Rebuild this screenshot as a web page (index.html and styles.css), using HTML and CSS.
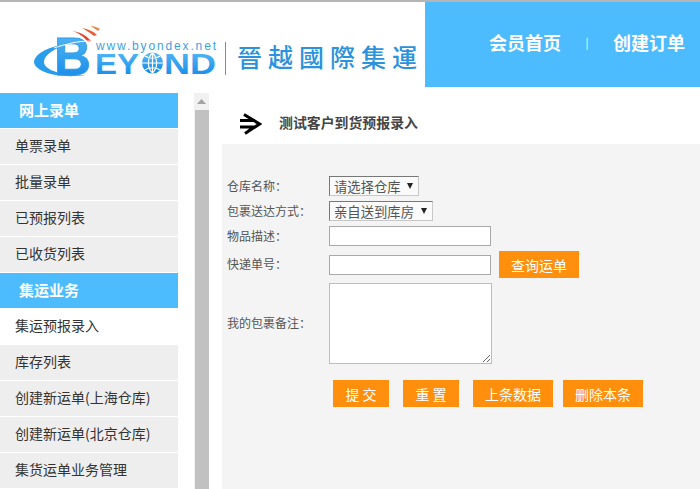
FILE: index.html
```html
<!DOCTYPE html>
<html lang="zh">
<head>
<meta charset="utf-8">
<title>测试客户到货预报录入</title>
<link rel="stylesheet" href="styles.css">
</head>
<body>
<header class="topbar">
  <div class="brand">
    <svg class="logo" width="183" height="54" viewBox="0 0 183 54" aria-label="Beyond">
      <defs>
        <linearGradient id="bl" x1="0" y1="0" x2="0" y2="1">
          <stop offset="0" stop-color="#5cbcf6"/>
          <stop offset="1" stop-color="#0f86e6"/>
        </linearGradient>
      </defs>
      <path d="M26 21 C9 25 0 32 0 38 C1 48 24 55 52 51 C28 52 10 46 10 38 C10 32 17 27 26 23 Z" fill="#2a9cec"/>
      <path d="M38 7 C46 8 52 11 57 17 L54 18 C50 13 45 9 38 7 Z" fill="#e8402a"/>
      <path d="M48 4 C54 5 59 7 63 11 L60 12 C56 9 52 6 48 4 Z" fill="#e8603a"/>
      <path d="M56 2 C60 2 63 3 66 5 L64 7 C61 5 59 3 56 2 Z" fill="#e88a50"/>
      <text class="logo-b" x="20" y="51" textLength="37" lengthAdjust="spacingAndGlyphs">B</text>
      <path d="M20 24 C32 20 44 17 56 17" fill="none" stroke="#fff" stroke-width="1"/>
      <text class="logo-url" x="62" y="26" textLength="120">www.byondex.net</text>
      <text class="logo-name" x="61" y="50" textLength="44" lengthAdjust="spacingAndGlyphs">EY</text>
      <circle cx="118.5" cy="39" r="10.5" fill="url(#bl)"/>
      <path d="M108 39 H129 M118.500 29 V49 M111 32 C115 35 122 35 126 32 M111 46 C115 43 122 43 126 46 M118.500 29 C113 34 113 44 118.500 49 M118.500 29 C124 34 124 44 118.500 49" fill="none" stroke="#fff" stroke-width="1.2"/>
      <text class="logo-name" x="130" y="50" textLength="52" lengthAdjust="spacingAndGlyphs">ND</text>
    </svg>
    <span class="brand-rule"></span>
    <span class="brand-name">晉越國際集運</span>
  </div>
  <nav class="topnav">
    <a class="topnav-link">会员首页</a>
    <span class="topnav-sep">|</span>
    <a class="topnav-link">创建订单</a>
  </nav>
</header>

<div class="layout">
  <aside class="sidebar">
    <h2 class="side-title">网上录单</h2>
    <a class="side-item">单票录单</a>
    <a class="side-item">批量录单</a>
    <a class="side-item">已预报列表</a>
    <a class="side-item">已收货列表</a>
    <h2 class="side-title">集运业务</h2>
    <a class="side-item is-active">集运预报录入</a>
    <a class="side-item">库存列表</a>
    <a class="side-item">创建新运单(上海仓库)</a>
    <a class="side-item">创建新运单(北京仓库)</a>
    <a class="side-item">集货运单业务管理</a>
  </aside>

  <div class="scrollbar">
    <div class="scroll-btn"><svg width="9" height="5" viewBox="0 0 9 5"><path d="M4.500 0 L9 5 H0 Z" fill="#a3a3a3"/></svg></div>
    <div class="scroll-thumb"></div>
  </div>

  <main class="content">
    <div class="page-title">
      <svg class="title-icon" width="22" height="22" viewBox="0 0 22 22">
        <path d="M4 1.500 L19.500 11 L5 20.500 M0 7.500 H15 M0 14 H14 L8.500 18" fill="none" stroke="#000" stroke-width="3"/>
      </svg>
      <h1 class="title-text">测试客户到货预报录入</h1>
    </div>
    <form class="panel">
      <div class="row">
        <label class="field-label">仓库名称：</label>
        <span class="pick-wrap"><select class="pick pick-short"><option>请选择仓库</option></select></span>
      </div>
      <div class="row row-next">
        <label class="field-label">包裹送达方式：</label>
        <span class="pick-wrap"><select class="pick pick-long"><option>亲自送到库房</option></select></span>
      </div>
      <div class="row row-next">
        <label class="field-label">物品描述：</label>
        <input class="text-input" type="text">
      </div>
      <div class="row row-next row-query">
        <label class="field-label">快递单号：</label>
        <input class="text-input" type="text">
        <button class="btn btn-query" type="button">查询运单</button>
      </div>
      <div class="row row-next">
        <label class="field-label">我的包裹备注：</label>
        <textarea class="note"></textarea>
      </div>
      <div class="actions">
        <button class="btn btn-short" type="button">提 交</button>
        <button class="btn btn-short" type="button">重 置</button>
        <button class="btn" type="button">上条数据</button>
        <button class="btn btn-last" type="button">删除本条</button>
      </div>
    </form>
  </main>
</div>
</body>
</html>
```

FILE: styles.css
```css
* { box-sizing: border-box; }
html, body { margin: 0; padding: 0; height: 489px; overflow: hidden; background: #fff; }
body {
  width: 700px;
  font-family: "Noto Sans CJK SC", "Liberation Sans", sans-serif;
  color: #333;
  border-top: 2px solid #b5b5b5;
}
.topbar { display: flex; height: 85px; }
.brand { width: 425px; display: flex; align-items: flex-start; padding: 22px 0 0 34px; }
.logo { flex: none; display: block; overflow: visible; }
.logo-b { font: bold 54px "Liberation Sans", sans-serif; fill: url(#bl); stroke: #2a9cec; stroke-width: 0.8px; }
.logo-name { font: bold 29px "Liberation Sans", sans-serif; fill: url(#bl); }
.logo-url { font: 12px "Liberation Sans", sans-serif; fill: #3f9fe0; }
.brand-rule { width: 1px; height: 33px; background: #3f9fe0; margin: 18px 11px 0 8px; flex: none; }
.brand-name {
  font-family: "Noto Sans CJK TC", sans-serif;
  font-size: 25px;
  font-weight: 500;
  letter-spacing: 6px;
  color: #2b93dc;
  white-space: nowrap;
  line-height: 32px;
  margin-top: 16px;
}

.topnav {
  width: 275px;
  background: #4cbcff;
  display: flex;
  align-items: center;
  padding: 0 0 5px 64px;
  color: #fff;
}
.topnav-link { font-size: 18px; font-weight: 700; line-height: 28px; width: 72px; white-space: nowrap; }
.topnav-sep { width: 52px; text-align: center; font-size: 11px; line-height: 28px; }

.layout { display: flex; margin-top: 6px; height: 396px; }
.sidebar { width: 178px; flex: none; }
.side-title {
  margin: 0;
  height: 36px;
  line-height: 33px;
  padding-left: 19px;
  font-size: 15px;
  font-weight: 700;
  color: #fff;
  background: #4cbcff;
  border-bottom: 1px solid #fff;
}
.side-item {
  display: block;
  height: 36px;
  line-height: 33px;
  padding-left: 15px;
  font-size: 14px;
  color: #333;
  background: #eee;
  border-bottom: 1px solid #fff;
  white-space: nowrap;
}
.side-item.is-active { background: #fff; }

.scrollbar { width: 15px; margin-left: 16px; flex: none; background: #f1f1f1; display: flex; flex-direction: column; }
.scroll-btn { height: 17px; display: flex; align-items: center; justify-content: center; }
.scroll-thumb { flex: 1; background: #c1c1c1; margin-left: 1px; }

.content { flex: 1; margin-left: 13px; min-width: 0; display: flex; flex-direction: column; }
.page-title { height: 51px; display: flex; align-items: flex-start; padding: 20px 0 0 18px; }
.title-icon { flex: none; display: block; }
.title-text { margin: -1px 0 0 17px; font-size: 13.9px; line-height: 20px; font-weight: 700; color: #444; white-space: nowrap; }

.panel { flex: 1; background: #f4f4f4; padding: 32px 0 0 5px; }
.row { display: flex; align-items: center; }
.row-next { margin-top: 5px; }
.row-query { height: 27px; }
.field-label { width: 102px; flex: none; font-size: 12px; line-height: 16px; padding-bottom: 1px; color: #555; white-space: nowrap; }
.pick-wrap { position: relative; display: block; }
.pick-wrap::after {
  content: "";
  position: absolute;
  top: 7px;
  right: 6px;
  border-style: solid;
  border-width: 6px 3.5px 0;
  border-color: #222 transparent transparent;
  pointer-events: none;
}
.pick {
  display: block;
  height: 20px;
  padding: 0 0 0 4px;
  font: 13.33px "Noto Sans CJK SC", sans-serif;
  color: #555;
  background: #fafafa;
  border: 1px solid;
  border-color: #777 #c8c8c8 #c8c8c8 #777;
  border-radius: 0;
  appearance: none;
}
.pick-short { width: 90px; }
.pick-long { width: 104px; }
.text-input {
  width: 162px;
  height: 20px;
  padding: 0;
  background: #fff;
  border: 1px solid #a9a9a9;
  border-radius: 0;
  outline: 0;
}
.note {
  display: block;
  width: 163px;
  height: 81px;
  padding: 2px;
  background: #fff;
  border: 1px solid #bdbdbd;
  border-radius: 0;
  outline: 0;
}
.btn {
  width: 80px;
  height: 27px;
  padding: 0;
  border: 0;
  background: #ff8f0c;
  color: #fff;
  font: 14px "Noto Sans CJK SC", sans-serif;
}
.btn-query { margin-left: 8px; }
.btn-short { width: 56px; }
.actions { display: flex; gap: 14px; margin: 16px 0 0 106px; }
.btn-last { margin-left: -4px; }
```
